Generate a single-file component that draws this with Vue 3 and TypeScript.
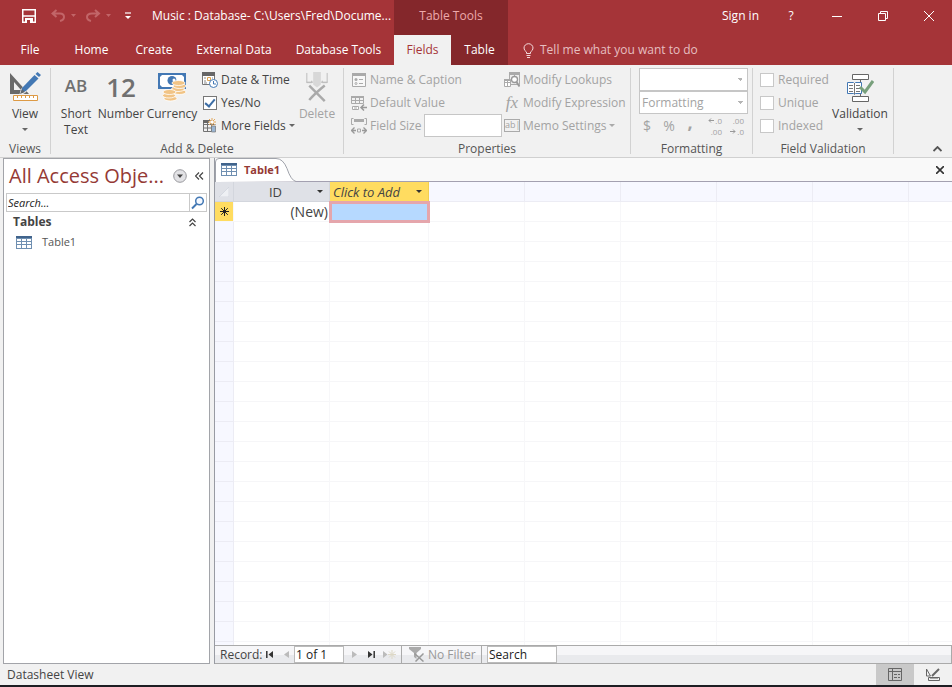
<script setup lang="ts">
import { ref } from 'vue'

const tabs: string[] = ['File', 'Home', 'Create', 'External Data', 'Database Tools']
const navSearch = ref('')
const record = ref('1 of 1')
const find = ref('Search')
const yesNo = ref(true)
const rowCount = 60
const extraColumns = 20
const checks: string[] = ['Required', 'Unique', 'Indexed']
</script>

<template>
  <div class="app">
    <header class="header">
      <div class="head-left">
        <div class="title-row">
          <div class="quick">
            <button class="bare save" aria-label="Save">
              <svg width="14" height="14" viewBox="0 0 14 14"><path d="M.75 .75h12.5v12.5H.75z" fill="none" stroke="#fff" stroke-width="1.5" /><path d="M1 7h12" stroke="#fff" stroke-width="1.500" /><path d="M3 9h8v5H3z" fill="#fff" /><path d="M5 11h3v3H5z" fill="#a4373a" /></svg>
            </button>
            <button class="bare undo" aria-label="Undo">
              <svg width="26" height="14" viewBox="0 0 26 14"><path d="M5.500 1 1.500 4.500l4 3.500M2 4.500h7q4 0 4 3.500 0 3-4 4" fill="none" stroke="#c26568" stroke-width="2" /><path d="M20 5h5l-2.500 3z" fill="#c26568" /></svg>
            </button>
            <button class="bare redo" aria-label="Redo">
              <svg width="26" height="14" viewBox="0 0 26 14"><path d="M9 1l4 3.500L9 8M12.500 4.500H6Q1 4.500 1 8q0 3 4 4" fill="none" stroke="#c26568" stroke-width="2" /><path d="M20 5h5l-2.500 3z" fill="#c26568" /></svg>
            </button>
            <button class="bare" aria-label="Customize Quick Access Toolbar">
              <svg width="6" height="8" viewBox="0 0 6 8"><path d="M0 1h6" stroke="#fff" stroke-width="1.200" /><path d="M0 4h6L3 7z" fill="#fff" /></svg>
            </button>
          </div>
          <span class="doc-title">Music : Database- C:\Users\Fred\Docume...</span>
        </div>
        <nav class="tabs">
          <button v-for="t in tabs" :key="t" class="tab">{{ t }}</button>
        </nav>
      </div>
      <div class="head-context">
        <div class="context-title">Table Tools</div>
        <nav class="context-tabs">
          <button class="tab selected">Fields</button>
          <button class="tab">Table</button>
        </nav>
      </div>
      <div class="head-right">
        <div class="window-row">
          <button class="bare sign-in">Sign in</button>
          <button class="bare win">?</button>
          <button class="bare win" aria-label="Minimize"><svg width="10" height="10" viewBox="0 0 10 10"><path d="M0 5.500h10" stroke="#fff" /></svg></button>
          <button class="bare win" aria-label="Restore"><svg width="10" height="10" viewBox="0 0 10 10"><path d="M.5 2.500h7v7h-7zM2.500 2.500v-2h7v7h-2" fill="none" stroke="#fff" /></svg></button>
          <button class="bare win" aria-label="Close"><svg width="10" height="10" viewBox="0 0 10 10"><path d="M0 0l10 10M10 0L0 10" stroke="#fff" /></svg></button>
        </div>
        <button class="bare tell">
          <svg width="11" height="15" viewBox="0 0 11 15"><path d="M3.500 10.500V9Q1 7.500 1 5a4.500 4.300 0 0 1 9 0q0 2.500-2.500 4v1.500zM3.500 12.500h4M4 14.500h3" fill="none" stroke="#f3d9da" /></svg>
          <span>Tell me what you want to do</span>
        </button>
      </div>
    </header>

    <section class="ribbon" aria-label="Fields">
      <div class="group views">
        <div class="body">
          <button class="bare big">
            <svg width="32" height="30" viewBox="0 0 32 30"><path fill-rule="evenodd" d="M1 1v21h19zM5 10v8h7z" fill="#6a6a6a" /><path d="M12 17 26 3l4 3-14 15-6 3z" fill="#f1f1f1" /><path d="M13 16 25.500 3l4 3.500L17 19l-5 2z" fill="#4378b4" /><path d="m26.500 2 2-2 3.500 3-2 2z" fill="#4378b4" /><path d="m11 22 2-5 3 3z" fill="#5f666d" /><path d="M4.500 23.500h24v5h-24z" fill="#fff" stroke="#dd9a45" /><path d="M8.500 24v2m4-2v2m4-2v2m4-2v2m4-2v2" stroke="#dd9a45" /></svg>
            <span>View</span>
            <i class="caret"></i>
          </button>
        </div>
        <div class="caption">Views</div>
      </div>

      <div class="group fields">
        <div class="body">
          <button class="bare big short"><span class="glyph ab">AB</span><span>Short<br />Text</span></button>
          <button class="bare big number"><span class="glyph num">12</span><span>Number</span></button>
          <button class="bare big currency">
            <svg width="30" height="30" viewBox="0 0 30 30"><path d="M2 2h26v14H2z" fill="#fff" stroke="#4378b4" stroke-width="2" /><path d="M2 2h4L2 6zM28 2h-4l4 4zM2 16v-4l4 4z" fill="#4378b4" /><circle cx="15" cy="8.500" r="4.500" fill="#4378b4" /><circle cx="17" cy="8" r="1.500" fill="#fff" /><g fill="#f1c486" stroke="#fff" stroke-width=".8"><ellipse cx="22.500" cy="20" rx="6.500" ry="2.500" /><ellipse cx="21" cy="17" rx="6.500" ry="2.500" /><ellipse cx="22.500" cy="14" rx="6.500" ry="2.500" /><ellipse cx="21.500" cy="11" rx="6.500" ry="2.500" /><ellipse cx="13.500" cy="26.500" rx="6.500" ry="2.500" /><ellipse cx="12" cy="23.500" rx="6.500" ry="2.500" /><ellipse cx="12.500" cy="20" rx="6.500" ry="2.500" /></g></svg>
            <span>Currency</span>
          </button>
          <div class="stack types">
            <button class="bare line">
              <svg width="16" height="16" viewBox="0 0 16 16"><path d="M.5 .5h12v12H.5z" fill="#fff" stroke="#777" /><path d="M0 0h13v4H0z" fill="#666" /><path d="M2 6h2m2 0h2m2 0h1M2 9h2m-2 2h3" stroke="#888" /><path d="M5.500 5.500h3v3h-3z" fill="#fff" stroke="#dda351" /><circle cx="11.500" cy="11.500" r="4" fill="#fff" stroke="#4378b4" /><path d="M11.500 9v3H14" fill="none" stroke="#4378b4" /></svg>
              <span>Date &amp; Time</span>
            </button>
            <label class="line"><input v-model="yesNo" type="checkbox" class="tick" /><span>Yes/No</span></label>
            <button class="bare line">
              <svg width="16" height="16" viewBox="0 0 16 16"><path d="M1.500 2.500h8v11h-8zM1.500 6.500h12m-12 3.500h12M5.500 3v10.500" fill="none" stroke="#737373" /><path d="M1 2h6v3H1z" fill="#666" /><path d="M9.500 8h4v6h-4z" fill="#9ab6d4" stroke="#777" stroke-width=".7" /><path d="M10 0v8M6 4h8M7 1l6 6M13 1 7 7" stroke="#e2a65a" /><circle cx="10" cy="4" r="1.500" fill="#fff" /></svg>
              <span>More Fields</span><i class="caret"></i>
            </button>
          </div>
          <button class="bare big delete" disabled>
            <svg width="24" height="31" viewBox="0 0 24 31"><path d="M1.500 1v10h5V9M22.500 1v10h-5V9M1 10.500h7M16 10.500h7" fill="none" stroke="#bcbcbc" /><path d="M8 0h8v13l-4 3-4-3z" fill="#d8d8d8" /><path d="M4 14 20 30M20 14Q10 22 4 29" fill="none" stroke="#aaa" stroke-width="2.500" /></svg>
            <span>Delete</span>
          </button>
        </div>
        <div class="caption">Add &amp; Delete</div>
      </div>

      <div class="group properties">
        <div class="body">
          <div class="stack props-a">
            <button class="bare line" disabled>
              <svg width="16" height="16" viewBox="0 0 16 16"><path d="M1.500 1.500h13v13h-13z" fill="#f8f8f8" stroke="#aaa" /><path d="M1 1h14v3H1z" fill="#aaa" /><path d="M8 7.500h4m-4 4h4" stroke="#aaa" /><circle cx="5" cy="7.500" r="1.500" fill="#aaa" /><circle cx="5" cy="11.500" r="1" fill="none" stroke="#aaa" /></svg>
              <span>Name &amp; Caption</span>
            </button>
            <button class="bare line" disabled>
              <svg width="16" height="16" viewBox="0 0 16 16"><path d="M.5 1.500h12v7H.5zM.5 5.500h12M4.500 2v7m4-7v7" fill="none" stroke="#aaa" /><path d="M0 1h13v2H0z" fill="#aaa" /><path d="M1.500 11.500h6v3h-6z" fill="#fff" stroke="#aaa" /><path d="M3 13h3" stroke="#aaa" /><path d="M16 12.500h-5m2-3-3 3 3 3" fill="none" stroke="#999" stroke-width="1.500" /></svg>
              <span>Default Value</span>
            </button>
            <div class="line disabled">
              <svg width="16" height="16" viewBox="0 0 16 16"><path d="M2.500 .5h-2v6h2M13.500 .5h2v6h-2" fill="none" stroke="#aaa" /><path d="M3 1h10v3H3z" fill="#aaa" /><path d="m3.500 9.500-3 3 3 3m9-6 3 3-3 3M1 12.500h4m6 0h4" fill="none" stroke="#999" stroke-width="1.300" /><path d="M6.500 11h3v3h-3z" fill="none" stroke="#aaa" /></svg>
              <label for="field-size">Field Size</label>
              <input id="field-size" class="size-box" type="text" disabled />
            </div>
          </div>
          <div class="stack props-b">
            <button class="bare line" disabled>
              <svg width="16" height="16" viewBox="0 0 16 16"><path d="M5.500 .5h10v12h-10zM10.500 1v3" fill="#eee" stroke="#aaa" /><path d="M5 0h11v3H5z" fill="#aaa" /><path d="M.5 7.500h6v7h-6zM.5 10.500h6M3.500 8v6" fill="#fff" stroke="#aaa" /><path d="M0 7h6v2H0z" fill="#aaa" /><circle cx="10.500" cy="7.500" r="3" fill="#fff" stroke="#999" stroke-width="1.300" /><path d="m12.500 10 3 4.500" stroke="#999" stroke-width="2" /></svg>
              <span>Modify Lookups</span>
            </button>
            <button class="bare line" disabled><span class="fx">fx</span><span>Modify Expression</span></button>
            <button class="bare line" disabled><span class="abl">ab|</span><span>Memo Settings</span><i class="caret"></i></button>
          </div>
        </div>
        <div class="caption">Properties</div>
      </div>

      <div class="group formatting">
        <div class="body">
          <select class="combo" aria-label="Data Type" disabled><option></option></select>
          <select class="combo" aria-label="Format" disabled><option>Formatting</option></select>
          <div class="formats">
            <button class="bare" disabled>$</button>
            <button class="bare" disabled>%</button>
            <button class="bare comma" disabled>,</button>
            <button class="bare dec" aria-label="Increase Decimals" disabled>
              <span class="with-arrow"><svg width="6" height="5" viewBox="0 0 6 5"><path d="M6 2.500H1M3 .5l-2 2 2 2" fill="none" stroke="#999" /></svg>.0</span>
              <span>.00</span>
            </button>
            <button class="bare dec" aria-label="Decrease Decimals" disabled>
              <span>.00</span>
              <span class="with-arrow"><svg width="6" height="5" viewBox="0 0 6 5"><path d="M0 2.500h5M3 .5l2 2-2 2" fill="none" stroke="#999" /></svg>.0</span>
            </button>
          </div>
        </div>
        <div class="caption">Formatting</div>
      </div>

      <div class="group validation">
        <div class="body">
          <div class="stack checks">
            <label v-for="c in checks" :key="c" class="line disabled"><input type="checkbox" class="tick off" disabled /><span>{{ c }}</span></label>
          </div>
          <button class="bare big valid">
            <svg width="28" height="30" viewBox="0 0 28 30"><path d="M6.500 2.500h16v5h-16zM6.500 24.500h16v5h-16zM14.500 8v3m0 10v3" fill="#fff" stroke="#666" /><path d="M1.500 10.500h6l1 1 1-1h6v11h-6l-1 1-1-1h-6z" fill="#fff" stroke="#4378b4" /><path d="M8.500 11v11M3 13.500h4m-4 3h4m-4 3h4m3-6h4m-4 3h4m-4 3h4" stroke="#777" /><path d="m14 15 5 5 8-11" fill="none" stroke="#78a07c" stroke-width="3" /></svg>
            <span>Validation</span>
            <i class="caret"></i>
          </button>
        </div>
        <div class="caption">Field Validation</div>
      </div>
      <button class="bare collapse" aria-label="Collapse the Ribbon"><svg width="9" height="6" viewBox="0 0 9 6"><path d="m.5 5 4-4 4 4" fill="none" stroke="#555" stroke-width="1.800" /></svg></button>
    </section>

    <main class="work">
      <aside class="nav">
        <div class="nav-head">
          <h1>All Access Obje...</h1>
          <button class="bare" aria-label="Choose category"><svg width="14" height="14" viewBox="0 0 14 14"><circle cx="7" cy="7" r="6.300" fill="#e2e2e5" stroke="#9a9a9f" /><path d="M4 5.500h6L7 9z" fill="#444" /></svg></button>
          <button class="bare" aria-label="Shutter bar"><svg width="9" height="8" viewBox="0 0 9 8"><path d="M4 .5.500 4 4 7.500M8 .5 4.500 4 8 7.500" fill="none" stroke="#444" stroke-width="1.200" /></svg></button>
        </div>
        <div class="nav-search">
          <input v-model="navSearch" type="text" placeholder="Search..." aria-label="Search objects" />
          <button class="bare" aria-label="Search"><svg width="14" height="14" viewBox="0 0 14 14"><circle cx="8.500" cy="5" r="3.800" fill="#f4f8ff" stroke="#4378b4" stroke-width="1.500" /><path d="M5.500 8 1 12.500" stroke="#4378b4" stroke-width="2" /></svg></button>
        </div>
        <button class="bare nav-group"><b>Tables</b><svg width="7" height="9" viewBox="0 0 7 9"><path d="m.5 4 3-3 3 3m-6 4 3-3 3 3" fill="none" stroke="#444" stroke-width="1.200" /></svg></button>
        <a class="nav-item" href="#table1">
          <svg width="16" height="13" viewBox="0 0 16 13"><path d="M0 0h16v13H0z" fill="#6f8fb1" /><path d="M1 3h4v2H1zm5 0h4v2H6zm5 0h4v2h-4zM1 6h4v2H1zm5 0h4v2H6zm5 0h4v2h-4zM1 9h4v3H1zm5 0h4v3H6zm5 0h4v3h-4z" fill="#fff" /><path d="M0 0h16v2H0z" fill="#41648c" /></svg>
          <span>Table1</span>
        </a>
      </aside>

      <section class="doc">
        <div class="doc-tabs">
          <div class="doc-tab">
            <svg class="tab-shape" width="82" height="24" viewBox="0 0 82 24"><path d="M.5 24V4Q.5 .5 4 .5h57q7 0 11 10 4 12 9 13" fill="#fff" stroke="#a0a3ab" /></svg>
            <svg width="16" height="13" viewBox="0 0 16 13"><path d="M0 0h16v13H0z" fill="#6f8fb1" /><path d="M1 3h4v2H1zm5 0h4v2H6zm5 0h4v2h-4zM1 6h4v2H1zm5 0h4v2H6zm5 0h4v2h-4zM1 9h4v3H1zm5 0h4v3H6zm5 0h4v3h-4z" fill="#fff" /><path d="M0 0h16v2H0z" fill="#41648c" /></svg>
            <b>Table1</b>
          </div>
          <button class="bare close-doc" aria-label="Close Table1"><svg width="8" height="8" viewBox="0 0 8 8"><path d="m0 0 8 8M8 0 0 8" stroke="#333" stroke-width="1.600" /></svg></button>
        </div>
        <div class="sheet">
          <table>
            <colgroup><col class="c-sel" /><col class="c-id" /><col class="c-add" /><col v-for="n in extraColumns" :key="n" class="c-id" /></colgroup>
            <thead>
              <tr>
                <th class="corner"><svg width="10" height="10" viewBox="0 0 10 10"><path d="M10 0v10H0z" fill="#eef0f4" stroke="#c9ced8" stroke-width=".6" /></svg></th>
                <th class="h-id"><div class="cell-head"><span>ID</span><i class="caret dark"></i></div></th>
                <th class="h-add"><div class="cell-head"><span>Click to Add</span><i class="caret dark"></i></div></th>
                <th v-for="n in extraColumns" :key="n" class="blank"></th>
              </tr>
            </thead>
            <tbody>
              <tr>
                <td class="star"><svg width="9" height="9" viewBox="0 0 9 9"><path d="M4.500 0v9M0 4.500h9M1.200 1.200l6.600 6.600M7.800 1.200 1.200 7.800" stroke="#222" /></svg></td>
                <td class="new">(New)</td>
                <td class="active"></td>
                <td v-for="n in extraColumns" :key="n"></td>
              </tr>
              <tr v-for="r in rowCount" :key="r">
                <td class="sel"></td>
                <td v-for="n in extraColumns + 2" :key="n"></td>
              </tr>
            </tbody>
          </table>
        </div>
        <footer class="records">
          <label class="rec-label" for="record">Record:</label>
          <button class="bare first" aria-label="First record"><svg width="7" height="7" viewBox="0 0 7 7"><path d="M.8 0v7" stroke="#333" stroke-width="1.500" /><path d="M7 0v7L2.500 3.500z" fill="#333" /></svg></button>
          <button class="bare prev" aria-label="Previous record"><svg width="5" height="7" viewBox="0 0 5 7"><path d="M5 0v7L0 3.500z" fill="#bbb" /></svg></button>
          <input id="record" v-model="record" class="rec-box" type="text" />
          <button class="bare next" aria-label="Next record"><svg width="5" height="7" viewBox="0 0 5 7"><path d="M0 0v7l5-3.500z" fill="#bbb" /></svg></button>
          <button class="bare last" aria-label="Last record"><svg width="7" height="7" viewBox="0 0 7 7"><path d="M6.200 0v7" stroke="#333" stroke-width="1.500" /><path d="M0 0v7l4.500-3.500z" fill="#333" /></svg></button>
          <button class="bare add" aria-label="New record"><svg width="13" height="9" viewBox="0 0 13 9"><path d="M0 1v7l4.500-3.500z" fill="#bbb" /><path d="M9 0v9M5 4.500h8M6 1.500l6 6m0-6-6 6" stroke="#ddd8c6" /></svg></button>
          <div class="filter">
            <svg width="16" height="15" viewBox="0 0 16 15"><path d="M0 0h12v2L7.500 6v6L5 10V6L0 2z" fill="#aaa" /><path d="m5.500 6.500 9 8m0-8-8 8" stroke="#999" stroke-width="1.500" /></svg>
            <span>No Filter</span>
          </div>
          <input v-model="find" class="find-box" type="text" aria-label="Search records" />
        </footer>
      </section>
    </main>

    <footer class="status">
      <span>Datasheet View</span>
      <div class="view-switch">
        <button class="bare on" aria-label="Datasheet View"><svg width="14" height="13" viewBox="0 0 14 13"><path d="M.5 .5h13v12H.5zM.5 3.500h13M4.500 .5v12M6 6.500h3m1 0h2m-6 3h3m1 0h2" fill="none" stroke="#666" /></svg></button>
        <button class="bare" aria-label="Design View"><svg width="15" height="13" viewBox="0 0 15 13"><path d="M.5 1v7h4zM2.500 9.500h11v3h-11zM5 10v1m2-1v1m2-1v1m2-1v1" fill="none" stroke="#666" /><path d="m6 8 7-7" stroke="#666" stroke-width="2" /></svg></button>
      </div>
    </footer>
  </div>
</template>

<style>
body {
  margin: 0;
  overflow: hidden;
}
</style>

<style scoped>
.app {
  display: flex;
  flex-direction: column;
  height: 100vh;
  background: #f1f1f1;
  color: #444;
  font: 12px/16px "Open Sans", "Noto Sans", sans-serif;
}
.app * {
  box-sizing: border-box;
}
.bare,
.tab {
  margin: 0;
  padding: 0;
  border: 0;
  background: none;
  color: inherit;
  font: inherit;
  white-space: nowrap;
}
svg {
  display: block;
  flex: none;
}
input,
select {
  font: inherit;
  color: inherit;
  border-radius: 0;
}
.header {
  display: grid;
  grid-template-columns: 394px 114px 1fr;
  flex: none;
  background: #a53438;
  color: #fff;
}
.title-row,
.window-row {
  display: flex;
  align-items: center;
  height: 35px;
  padding-bottom: 3px;
}
.quick {
  display: flex;
  align-items: center;
  flex: none;
  width: 152px;
  padding-left: 22px;
}
.save {
  margin-right: 15px;
}
.undo {
  margin-right: 9px;
}
.redo {
  margin-right: 13px;
}
.doc-title {
  white-space: nowrap;
}
.tabs {
  display: grid;
  grid-template-columns: 60px 63px 62px 98px 111px;
}
.tab {
  height: 30px;
}
.head-context {
  background: #84272b;
}
.context-title {
  height: 35px;
  padding-top: 8px;
  text-align: center;
  color: #eda9ab;
}
.context-tabs {
  display: grid;
  grid-template-columns: 1fr 1fr;
}
.selected {
  background: #f1f1f1;
  color: #a53438;
}
.window-row {
  justify-content: flex-end;
}
.sign-in {
  margin-right: 9px;
}
.win {
  display: flex;
  align-items: center;
  justify-content: center;
  width: 46px;
  height: 32px;
}
.tell {
  display: flex;
  align-items: center;
  gap: 6px;
  height: 30px;
  padding-left: 15px;
  color: #e6bfc0;
}
.ribbon {
  display: flex;
  flex: none;
  padding: 3px 0 0;
  height: 93px;
  border-bottom: 1px solid #d0d0d0;
}
.group {
  display: flex;
  flex-direction: column;
  flex: none;
  height: 86px;
  border-right: 1px solid #d2d2d2;
}
.body {
  display: flex;
  flex: none;
  height: 70px;
}
.caption {
  padding-top: 3px;
  text-align: center;
  color: #555;
}
.views {
  width: 51px;
}
.fields {
  width: 293px;
}
.properties {
  width: 287px;
}
.formatting {
  width: 122px;
}
.validation {
  width: 141px;
}
.big {
  display: flex;
  flex-direction: column;
  flex: none;
  align-items: center;
  padding-top: 4px;
  height: 72px;
}
.big > svg,
.glyph {
  flex: none;
  height: 30px;
  margin-bottom: 4px;
}
.glyph {
  color: #707070;
  font-weight: 600;
}
.ab {
  font-size: 17px;
  line-height: 28px;
}
.num {
  font-size: 26px;
  line-height: 30px;
}
.caret {
  flex: none;
  border: 3px solid transparent;
  border-top-color: #666;
  border-bottom: 0;
}
.big .caret {
  margin-top: 6px;
}
.views .big {
  width: 50px;
}
.fields .body {
  padding-left: 1px;
}
.short {
  width: 48px;
}
.number {
  width: 42px;
}
.currency {
  width: 60px;
}
.delete {
  width: 36px;
}
.valid {
  width: 58px;
}
.stack {
  display: flex;
  flex-direction: column;
  flex: none;
}
.line {
  display: flex;
  align-items: center;
  gap: 3px;
  height: 23px;
  white-space: nowrap;
}
.types {
  width: 97px;
}
.props-a {
  width: 160px;
  padding-left: 7px;
}
:disabled,
.disabled {
  color: #a3a3a3;
}
:disabled .caret {
  border-top-color: #aaa;
}
.tick {
  appearance: none;
  flex: none;
  width: 14px;
  height: 14px;
  margin: 0 1px;
  border: 1px solid #777;
  background: #fff;
}
.tick:checked::before {
  content: "";
  display: block;
  width: 4px;
  height: 8px;
  margin: 0 auto;
  border: solid #3c6da5;
  border-width: 0 2px 2px 0;
  transform: rotate(40deg);
}
.tick.off {
  border-color: #c8c8c8;
  margin-left: 0;
}
.size-box {
  width: 78px;
  height: 23px;
  border: 1px solid #c6c6c6;
  background: #fff;
}
.fx {
  width: 16px;
  text-align: center;
  font: italic 17px/16px "Liberation Serif", serif;
}
.abl {
  width: 16px;
  height: 13px;
  border: 1px solid #aaa;
  font-size: 9px;
  line-height: 10px;
}
.formatting .body {
  flex-direction: column;
  padding: 0 4px 0 8px;
}
.combo {
  flex: none;
  appearance: none;
  height: 23px;
  padding: 0 2px;
  border: 1px solid #c6c6c6;
  background: conic-gradient(from -45deg at 50% 100%, #b5b5b5 90deg, transparent 0) no-repeat right 4px center / 6px 3px, #fff;
  opacity: 1;
}
.formats {
  display: grid;
  grid-template-columns: 16px 28px 14px 25px 22px;
  align-items: center;
  height: 23px;
  font-size: 14px;
}
.comma {
  height: 22px;
  padding-bottom: 8px;
  font-size: 18px;
  line-height: 10px;
  font-weight: 700;
}
.dec {
  display: grid;
  justify-items: end;
  font-size: 8px;
  line-height: 11px;
}
.with-arrow {
  display: flex;
  align-items: center;
  gap: 1px;
}
.checks {
  width: 78px;
  padding-left: 7px;
}
.collapse {
  margin-left: auto;
  padding: 72px 10px 0;
}
.work {
  display: flex;
  flex: 1;
  min-height: 0;
  padding-left: 3px;
}
.nav {
  flex: none;
  width: 207px;
  border: 1px solid #a2a4a9;
  background: #fff;
}
.nav-head {
  display: flex;
  align-items: center;
  gap: 8px;
  height: 34px;
  padding: 0 5px;
}
h1 {
  flex: 1;
  margin: 0;
  color: #953a35;
  font-size: 20px;
  line-height: 30px;
  font-weight: 400;
  white-space: nowrap;
}
.nav-search {
  display: flex;
  height: 19px;
  margin: 0 2px;
  border: 1px solid #c9c9c9;
}
.nav-search input {
  flex: 1;
  min-width: 0;
  padding: 0 1px;
  border: 0;
  font-size: 11px;
}
.nav-search input::placeholder {
  color: #222;
  font-style: italic;
}
.nav-search button {
  padding: 0 1px;
  border-left: 1px solid #c9c9c9;
}
.nav-group {
  display: flex;
  align-items: center;
  justify-content: space-between;
  width: 100%;
  height: 20px;
  padding: 0 13px 0 9px;
}
.nav-item {
  display: flex;
  align-items: center;
  gap: 10px;
  height: 20px;
  padding-left: 12px;
  color: #555;
  font-size: 11px;
  text-decoration: none;
}
.doc {
  display: flex;
  flex-direction: column;
  flex: 1;
  min-width: 0;
  margin-left: 4px;
  border-left: 1px solid #989ba3;
  background: #fff;
}
.doc-tabs {
  display: flex;
  align-items: center;
  justify-content: space-between;
  flex: none;
  height: 24px;
  background: #f9f9f9;
  border-bottom: 1px solid #a3a0b0;
}
.doc-tab {
  display: flex;
  position: relative;
  align-items: center;
  gap: 7px;
  height: 24px;
  padding-left: 6px;
  color: #953a35;
  font-size: 11px;
}
.doc-tab > * {
  position: relative;
}
.doc-tab .tab-shape {
  position: absolute;
  left: 0;
  top: 0;
}
.close-doc {
  padding: 0 8px;
}
.sheet {
  flex: 1;
  min-height: 0;
  overflow: hidden;
}
table {
  width: 2134px;
  table-layout: fixed;
  border-collapse: separate;
  border-spacing: 0;
  font-size: 13px;
}
.c-sel {
  width: 19px;
}
.c-id {
  width: 96px;
}
.c-add {
  width: 99px;
}
td,
th {
  height: 20px;
  padding: 0;
  border-right: 1px solid #f7f7f9;
  border-bottom: 1px solid #f6f6f8;
  font-weight: 400;
  line-height: 18px;
}
.corner,
.h-id {
  background: #dfe1e7;
  border-color: #d3d6dd;
}
.corner svg {
  margin-left: 4px;
}
.h-add {
  background: #ffdc60;
  border-color: #f2cf50;
  font-style: italic;
}
.cell-head {
  display: flex;
  align-items: center;
  padding-right: 6px;
}
.cell-head span {
  flex: 1;
}
.h-add .cell-head {
  text-align: left;
  padding-left: 3px;
}
.dark {
  border-top-color: #333;
}
.blank,
.sel {
  border-color: #ececf4;
  background: #f7f8ff;
}
.star {
  background: #ffdc60;
}
.star svg {
  margin: 0 auto;
}
.new {
  text-align: right;
  padding-right: 1px;
  font-size: 14px;
}
.active {
  background: #b6d9ff;
  border: 0;
  outline: 3px solid #e5a6ac;
  outline-offset: -2px;
}
.records {
  display: flex;
  align-items: center;
  flex: none;
  height: 19px;
  border: 1px solid #aaa;
  border-left: 0;
  background: linear-gradient(#f6f6f8 50%, #e9eaed 50%);
}
.rec-label {
  width: 51px;
  padding-left: 5px;
}
.first {
  margin-right: 11px;
}
.prev {
  margin-right: 5px;
}
.rec-box {
  width: 50px;
  height: 17px;
  padding: 0 1px;
  border: 1px solid #bbb;
  color: #222;
}
.next {
  margin: 0 11px 0 8px;
}
.last {
  margin-right: 8px;
}
.filter {
  display: flex;
  align-items: center;
  gap: 3px;
  width: 81px;
  height: 17px;
  margin: 0 5px;
  padding-left: 7px;
  border: solid #aaa;
  border-width: 0 1px;
  color: #999;
  white-space: nowrap;
}
.find-box {
  width: 70px;
  height: 17px;
  padding: 0 1px;
  border: 1px solid #bbb;
  color: #222;
}
.status {
  display: flex;
  align-items: center;
  justify-content: space-between;
  flex: none;
  height: 23px;
  padding-left: 7px;
  border-bottom: 2px solid #1d1d22;
}
.view-switch {
  display: flex;
}
.view-switch button {
  display: flex;
  align-items: center;
  justify-content: center;
  width: 38px;
  height: 21px;
}
.on {
  background: #c9c9c9;
}
</style>
